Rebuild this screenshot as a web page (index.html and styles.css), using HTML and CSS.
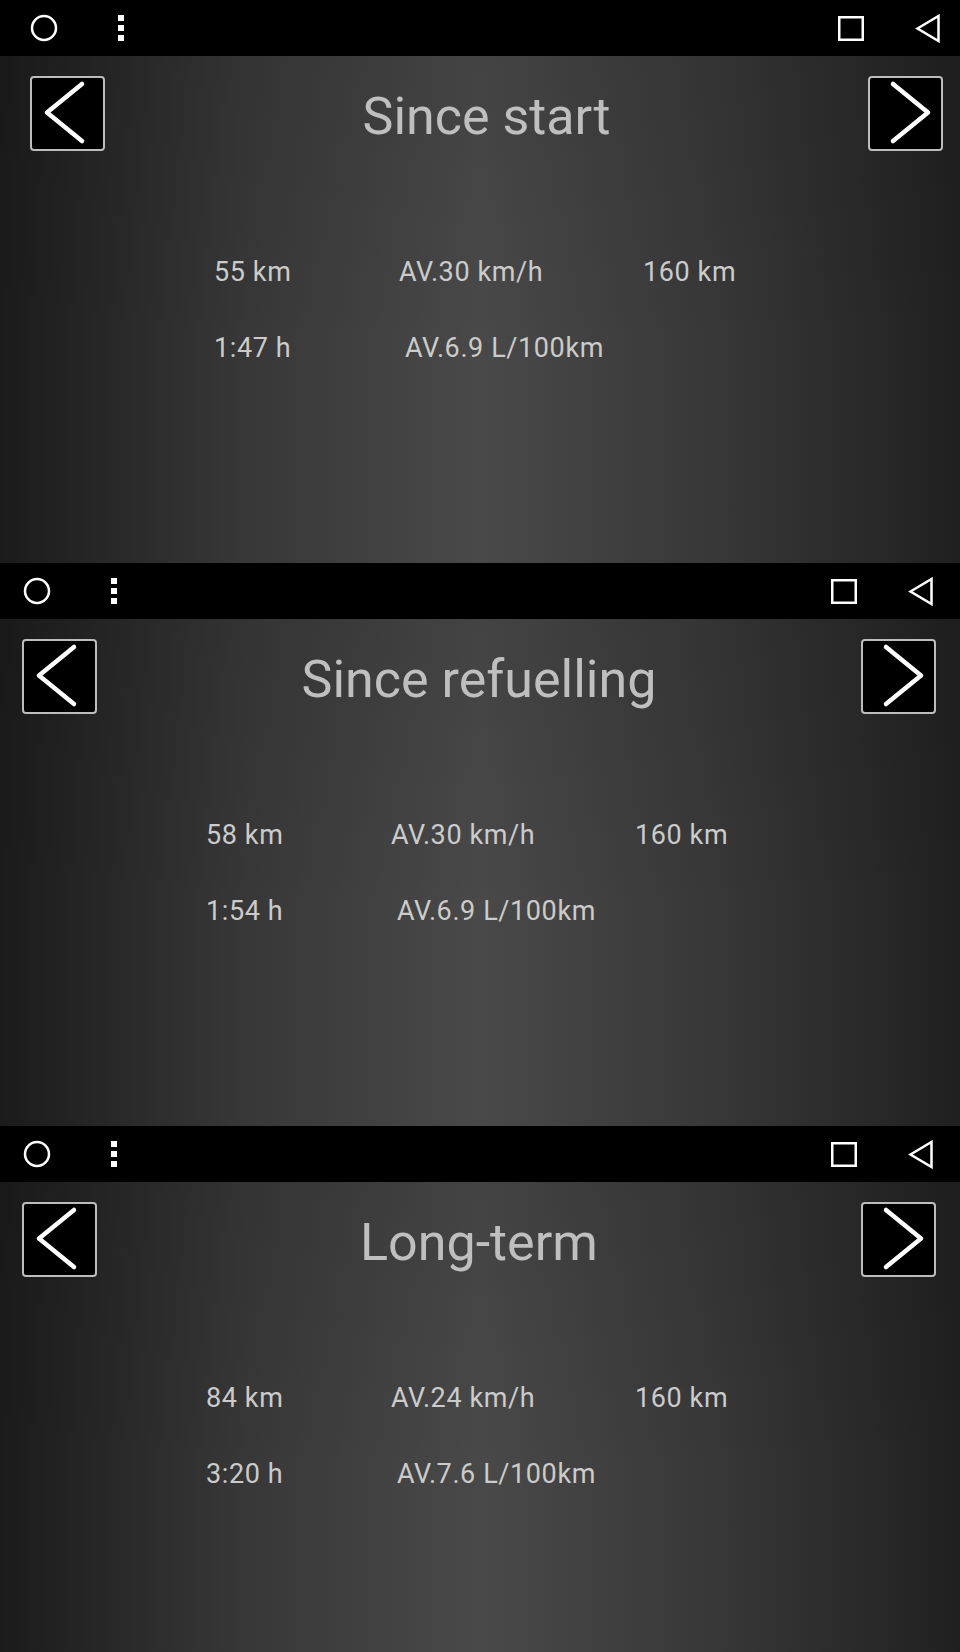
FILE: index.html
```html
<!DOCTYPE html>
<html lang="en">
<head>
    <meta charset="UTF-8">
    <meta name="viewport" content="width=device-width, initial-scale=1.0">
    <title>Trip Computer</title>
    <link rel="stylesheet" href="styles.css">
</head>
<body>
    <div class="panel panel--offset">
        <div class="nav-bar">
            <svg class="icon-home" width="28" height="28" viewBox="0 0 28 28"><circle cx="14" cy="14" r="12"/></svg>
            <svg class="icon-menu" width="6" height="26" viewBox="0 0 6 26"><rect x="0" y="0" width="6" height="6"/><rect x="0" y="10" width="6" height="6"/><rect x="0" y="20" width="6" height="6"/></svg>
            <div class="spacer"></div>
            <svg class="icon-recent" width="26" height="25" viewBox="0 0 26 25"><rect x="1.25" y="1.25" width="23.5" height="22.5"/></svg>
            <svg class="icon-back" width="26" height="29" viewBox="0 0 26 29"><polygon points="3.5,14.5 24.5,2 24.5,27"/></svg>
        </div>
        <div class="panel-body">
            <div class="header">
                <div class="arrow-btn"><svg viewBox="0 0 71 71"><path d="M50 6 L15 34.5 L50 63"/></svg></div>
                <div class="title">Since start</div>
                <div class="arrow-btn"><svg viewBox="0 0 71 71"><path d="M23 6 L58 34.5 L23 63"/></svg></div>
            </div>
            <div class="stats">
                <div class="stat">55 km</div>
                <div class="stat">AV.30 km/h</div>
                <div class="stat">160 km</div>
                <div class="stat">1:47 h</div>
                <div class="stat stat--inset">AV.6.9 L/100km</div>
                <div class="stat"></div>
            </div>
        </div>
    </div>

    <div class="panel">
        <div class="nav-bar">
            <svg class="icon-home" width="28" height="28" viewBox="0 0 28 28"><circle cx="14" cy="14" r="12"/></svg>
            <svg class="icon-menu" width="6" height="26" viewBox="0 0 6 26"><rect x="0" y="0" width="6" height="6"/><rect x="0" y="10" width="6" height="6"/><rect x="0" y="20" width="6" height="6"/></svg>
            <div class="spacer"></div>
            <svg class="icon-recent" width="26" height="25" viewBox="0 0 26 25"><rect x="1.25" y="1.25" width="23.5" height="22.5"/></svg>
            <svg class="icon-back" width="26" height="29" viewBox="0 0 26 29"><polygon points="3.5,14.5 24.5,2 24.5,27"/></svg>
        </div>
        <div class="panel-body">
            <div class="header">
                <div class="arrow-btn"><svg viewBox="0 0 71 71"><path d="M50 6 L15 34.5 L50 63"/></svg></div>
                <div class="title">Since refuelling</div>
                <div class="arrow-btn"><svg viewBox="0 0 71 71"><path d="M23 6 L58 34.5 L23 63"/></svg></div>
            </div>
            <div class="stats">
                <div class="stat">58 km</div>
                <div class="stat">AV.30 km/h</div>
                <div class="stat">160 km</div>
                <div class="stat">1:54 h</div>
                <div class="stat stat--inset">AV.6.9 L/100km</div>
                <div class="stat"></div>
            </div>
        </div>
    </div>

    <div class="panel">
        <div class="nav-bar">
            <svg class="icon-home" width="28" height="28" viewBox="0 0 28 28"><circle cx="14" cy="14" r="12"/></svg>
            <svg class="icon-menu" width="6" height="26" viewBox="0 0 6 26"><rect x="0" y="0" width="6" height="6"/><rect x="0" y="10" width="6" height="6"/><rect x="0" y="20" width="6" height="6"/></svg>
            <div class="spacer"></div>
            <svg class="icon-recent" width="26" height="25" viewBox="0 0 26 25"><rect x="1.25" y="1.25" width="23.5" height="22.5"/></svg>
            <svg class="icon-back" width="26" height="29" viewBox="0 0 26 29"><polygon points="3.5,14.5 24.5,2 24.5,27"/></svg>
        </div>
        <div class="panel-body">
            <div class="header">
                <div class="arrow-btn"><svg viewBox="0 0 71 71"><path d="M50 6 L15 34.5 L50 63"/></svg></div>
                <div class="title">Long-term</div>
                <div class="arrow-btn"><svg viewBox="0 0 71 71"><path d="M23 6 L58 34.5 L23 63"/></svg></div>
            </div>
            <div class="stats">
                <div class="stat">84 km</div>
                <div class="stat">AV.24 km/h</div>
                <div class="stat">160 km</div>
                <div class="stat">3:20 h</div>
                <div class="stat stat--inset">AV.7.6 L/100km</div>
                <div class="stat"></div>
            </div>
        </div>
    </div>
</body>
</html>
```

FILE: styles.css
```css
body {
    margin: 0;
    background-color: #000;
    font-family: Roboto, "Liberation Sans", sans-serif;
}

.panel {
    height: 563px;
    display: flex;
    flex-direction: column;
    overflow: hidden;
}

/* the first capture sits a few pixels to the right */
.panel--offset .nav-bar {
    padding-left: 30px;
    padding-right: 20px;
}

.panel--offset .panel-body {
    padding-left: 30px;
    padding-right: 17px;
}

.nav-bar {
    height: 56px;
    flex-shrink: 0;
    background-color: #000;
    display: flex;
    align-items: center;
    padding-left: 23px;
    padding-right: 27px;
}

.nav-bar svg {
    display: block;
}

.icon-home circle {
    fill: none;
    stroke: #fff;
    stroke-width: 2.5;
}

.icon-menu {
    margin-left: 60px;
}

.icon-menu rect {
    fill: #fff;
}

.spacer {
    flex: 1;
}

.icon-recent rect,
.icon-back polygon {
    fill: none;
    stroke: #fff;
    stroke-width: 2.5;
}

.icon-back {
    margin-left: 50px;
}

.panel-body {
    flex: 1;
    padding: 20px 24px 0 22px;
    background:
        linear-gradient(to bottom, rgba(0, 0, 0, 0.08), rgba(0, 0, 0, 0) 60%),
        linear-gradient(to right, #1b1b1b 0%, #373737 25%, #494949 50%, #373737 75%, #202020 100%);
}

.header {
    display: flex;
    align-items: flex-start;
}

.arrow-btn {
    width: 71px;
    height: 71px;
    flex-shrink: 0;
    background-color: #000;
    border: 2px solid #bdbdbd;
    border-radius: 4px;
}

.arrow-btn svg {
    display: block;
    width: 71px;
    height: 71px;
}

.arrow-btn path {
    fill: none;
    stroke: #fff;
    stroke-width: 4.5;
    stroke-linecap: round;
    stroke-linejoin: round;
}

.title {
    flex: 1;
    text-align: center;
    font-size: 52px;
    line-height: 75px;
    padding-top: 3px;
    color: #bfbfbf;
}

.stats {
    display: grid;
    grid-template-columns: 185px 244px auto;
    row-gap: 46px;
    margin-top: 103px;
    padding-left: 184px;
}

.stat {
    font-size: 27px;
    line-height: 30px;
    letter-spacing: 0.6px;
    color: #cbcbcb;
    white-space: nowrap;
}

.stat--inset {
    padding-left: 6px;
}
```
